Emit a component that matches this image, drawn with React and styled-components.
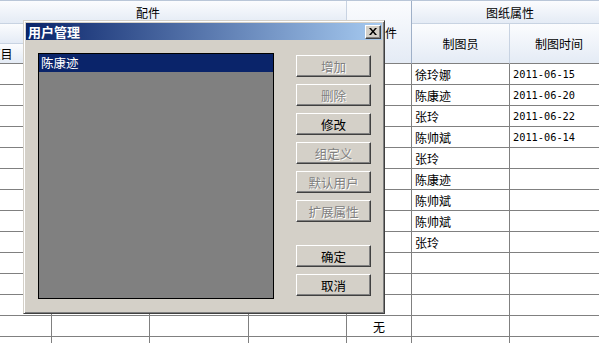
import React from 'react'
import styled, { createGlobalStyle } from 'styled-components'

const GlobalStyle = createGlobalStyle`
  html, body {
    margin: 0;
    padding: 0;
    background: #ffffff;
  }
  body {
    font-family: "Noto Sans CJK SC", "Noto Sans", sans-serif;
    font-size: 12px;
    color: #000;
  }
`

const cols = '102px 98px 99px 98px 65px 98px 99px'

const rows = [
  { name: '徐玲娜', date: '2011-06-15' },
  { name: '陈康迹', date: '2011-06-20' },
  { name: '张玲', date: '2011-06-22' },
  { name: '陈帅斌', date: '2011-06-14' },
  { name: '张玲' },
  { name: '陈康迹' },
  { name: '陈帅斌' },
  { name: '陈帅斌' },
  { name: '张玲' },
  {}, {}, {},
  { part: '无' },
  { part: '无' },
]

const buttons = [
  { label: '增加', disabled: true },
  { label: '删除', disabled: true },
  { label: '修改' },
  { label: '组定义', disabled: true },
  { label: '默认用户', disabled: true },
  { label: '扩展属性', disabled: true },
]

const Screen = styled.div`
  position: relative;
  width: 599px;
  height: 343px;
  overflow: hidden;
  background: #fff;
`

const Table = styled.div`
  margin-left: -50px;
  width: 660px;
`

const Head = styled.div`
  display: grid;
  grid-template-columns: ${cols};
  grid-template-rows: 23px 20px 20px;
  border-top: 1px solid #b9c6d8;
`

const HeadCell = styled.div`
  grid-column: ${p => p.$col};
  grid-row: ${p => p.$row};
  display: flex;
  align-items: center;
  justify-content: center;
  white-space: nowrap;
  background: linear-gradient(#fbfcfe, #e4ebf5);
  border-right: 1px solid ${p => (p.$strong ? '#9fb0c8' : '#c8d3e2')};
  border-bottom: 1px solid ${p => (p.$dark ? '#808080' : '#c8d3e2')};
`

const Row = styled.div`
  display: grid;
  grid-template-columns: ${cols};
  height: 21px;
`

const Cell = styled.div`
  box-sizing: border-box;
  border-right: 1px solid #808080;
  border-bottom: 1px solid #808080;
  padding-left: ${p => (p.$center ? 0 : '3px')};
  display: flex;
  align-items: center;
  justify-content: ${p => (p.$center ? 'center' : 'flex-start')};
  white-space: nowrap;
  font-family: ${p => (p.$mono ? '"DejaVu Sans Mono", monospace' : 'inherit')};
  font-size: ${p => (p.$mono ? '10.3px' : '12px')};
`

const Dialog = styled.div`
  position: absolute;
  left: 23px;
  top: 20px;
  width: 362px;
  height: 294px;
  box-sizing: border-box;
  background: #d4d0c8;
  border: 1px solid;
  border-color: #d4d0c8 #404040 #404040 #d4d0c8;
  box-shadow: inset 1px 1px #ffffff, inset -1px -1px #808080;
  padding: 2px;
  display: flex;
  flex-direction: column;
`

const TitleBar = styled.div`
  height: 17px;
  display: flex;
  align-items: center;
  justify-content: space-between;
  padding-left: 2px;
  background: linear-gradient(to right, #0a246a, #a6caf0);
  color: #fff;
  font-weight: bold;
  font-size: 13px;
`

const CloseButton = styled.div`
  width: 14px;
  height: 12px;
  margin-right: 1px;
  background: #d4d0c8;
  border: 1px solid;
  border-color: #fff #404040 #404040 #fff;
  box-shadow: inset -1px -1px #808080;
  display: flex;
  align-items: center;
  justify-content: center;
`

const Body = styled.div`
  display: flex;
  padding: 13px 10px 0 12px;
`

const ListBox = styled.div`
  width: 236px;
  height: 246px;
  box-sizing: border-box;
  background: #808080;
  border: 1px solid #000;
`

const ListItem = styled.div`
  height: 18px;
  line-height: 18px;
  padding-left: 2px;
  font-size: 12.5px;
  background: ${p => (p.$selected ? '#0a246a' : 'transparent')};
  color: #fff;
`

const ButtonColumn = styled.div`
  display: flex;
  flex-direction: column;
  gap: 7px;
  margin-left: 22px;
  padding-top: 2px;
`

const Button = styled.div`
  width: 75px;
  height: 22px;
  box-sizing: border-box;
  border: 1px solid;
  border-color: #fff #404040 #404040 #fff;
  box-shadow: inset -1px -1px #808080;
  display: flex;
  align-items: center;
  justify-content: center;
  font-size: 12.5px;
  margin-top: ${p => p.$gap || 0}px;
  color: ${p => (p.$disabled ? '#808080' : '#000')};
  text-shadow: ${p => (p.$disabled ? '1px 1px #ffffff' : 'none')};
`

export default function App() {
  return (
    <Screen>
      <GlobalStyle />
      <Table>
        <Head>
          <HeadCell $col="1 / 5" $row="1">配件</HeadCell>
          <HeadCell $col="1 / 5" $row="2" />
          <HeadCell $col="1" $row="3" $dark>项目</HeadCell>
          <HeadCell $col="2" $row="3" $dark />
          <HeadCell $col="3" $row="3" $dark />
          <HeadCell $col="4" $row="3" $dark />
          <HeadCell $col="5" $row="1 / 4" $strong $dark>零部件</HeadCell>
          <HeadCell $col="6 / 8" $row="1">图纸属性</HeadCell>
          <HeadCell $col="6" $row="2 / 4" $dark>制图员</HeadCell>
          <HeadCell $col="7" $row="2 / 4" $dark>制图时间</HeadCell>
        </Head>
        {rows.map((r, i) => (
          <Row key={i}>
            <Cell />
            <Cell />
            <Cell />
            <Cell />
            <Cell $center>{r.part}</Cell>
            <Cell>{r.name}</Cell>
            <Cell $mono>{r.date}</Cell>
          </Row>
        ))}
      </Table>

      <Dialog>
        <TitleBar>
          <span>用户管理</span>
          <CloseButton>
            <svg width="8" height="7" viewBox="0 0 8 7">
              <path d="M0 0h2l2 2.5L6 0h2L5 3.5 8 7H6L4 4.5 2 7H0l3-3.5z" fill="#000" />
            </svg>
          </CloseButton>
        </TitleBar>
        <Body>
          <ListBox>
            <ListItem $selected>陈康迹</ListItem>
          </ListBox>
          <ButtonColumn>
            {buttons.map(b => (
              <Button key={b.label} $disabled={b.disabled}>{b.label}</Button>
            ))}
            <Button $gap={16}>确定</Button>
            <Button>取消</Button>
          </ButtonColumn>
        </Body>
      </Dialog>
    </Screen>
  )
}
